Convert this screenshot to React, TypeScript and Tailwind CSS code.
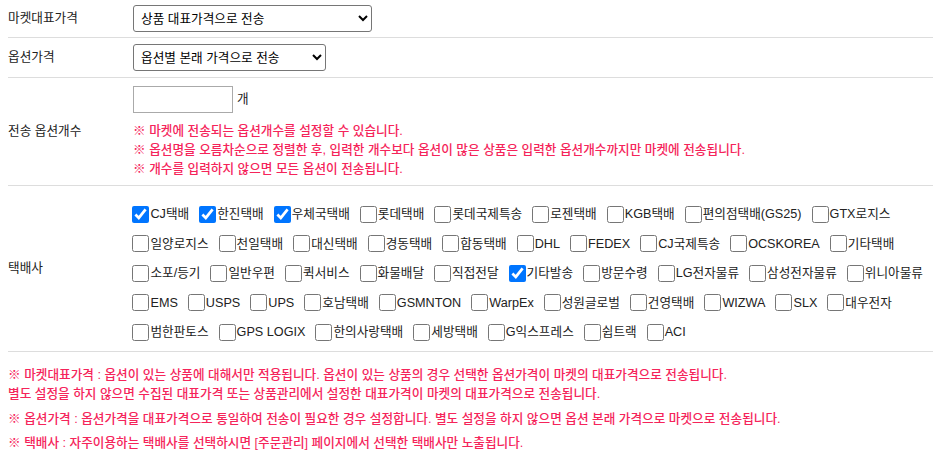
import React from "react";

const couriers: [string, boolean][][] = [
  [["CJ택배", true], ["한진택배", true], ["우체국택배", true], ["롯데택배", false], ["롯데국제특송", false], ["로젠택배", false], ["KGB택배", false], ["편의점택배(GS25)", false], ["GTX로지스", false]],
  [["일양로지스", false], ["천일택배", false], ["대신택배", false], ["경동택배", false], ["합동택배", false], ["DHL", false], ["FEDEX", false], ["CJ국제특송", false], ["OCSKOREA", false], ["기타택배", false]],
  [["소포/등기", false], ["일반우편", false], ["퀵서비스", false], ["화물배달", false], ["직접전달", false], ["기타발송", true], ["방문수령", false], ["LG전자물류", false], ["삼성전자물류", false], ["위니아물류", false]],
  [["EMS", false], ["USPS", false], ["UPS", false], ["호남택배", false], ["GSMNTON", false], ["WarpEx", false], ["성원글로벌", false], ["건영택배", false], ["WIZWA", false], ["SLX", false], ["대우전자", false]],
  [["범한판토스", false], ["GPS LOGIX", false], ["한의사랑택배", false], ["세방택배", false], ["G익스프레스", false], ["쉽트랙", false], ["ACI", false]],
];

const font = { fontFamily: "'Liberation Sans', 'Noto Sans CJK KR', sans-serif" };

export default function App() {
  return (
    <div className="w-[933px] bg-white text-[12.65px] text-[#222] pl-2" style={font}>
      <div className="flex items-center h-[38px] border-b border-[#ddd]">
        <div className="w-[125px]">마켓대표가격</div>
        <select defaultValue="a" className="w-[239px] h-[27px] border border-[#767676] rounded-[3px] pl-[3px] text-[12.65px] text-black bg-white">
          <option value="a">상품 대표가격으로 전송</option>
        </select>
      </div>
      <div className="flex items-center h-[40px] border-b border-[#ddd]">
        <div className="w-[125px]">옵션가격</div>
        <select defaultValue="a" className="w-[193px] h-[27px] border border-[#767676] rounded-[3px] pl-[3px] text-[12.65px] text-black bg-white">
          <option value="a">옵션별 본래 가격으로 전송</option>
        </select>
      </div>
      <div className="flex items-center h-[108px] border-b border-[#ddd]">
        <div className="w-[125px]">전송 옵션개수</div>
        <div className="flex flex-col pt-[8px] pb-[6px]">
          <div className="flex items-center gap-[4px]">
            <input type="text" className="w-[100px] h-[27px] border border-[#aaa] bg-white" />
            <span>개</span>
          </div>
          <div className="mt-[9px] text-[#f5245a] font-medium leading-[19px]">
            <div>※ 마켓에 전송되는 옵션개수를 설정할 수 있습니다.</div>
            <div>※ 옵션명을 오름차순으로 정렬한 후, 입력한 개수보다 옵션이 많은 상품은 입력한 옵션개수까지만 마켓에 전송됩니다.</div>
            <div>※ 개수를 입력하지 않으면 모든 옵션이 전송됩니다.</div>
          </div>
        </div>
      </div>
      <div className="flex items-center h-[166px] border-b border-[#ddd]">
        <div className="w-[125px]">택배사</div>
        <div className="flex flex-col pt-[14px] pb-[4px]">
          {couriers.map((row, i) => (
            <div key={i} className="flex items-center h-[29.5px]">
              {row.map(([name, checked]) => (
                <label key={name} className="flex items-center mr-[10px] whitespace-nowrap">
                  <input type="checkbox" defaultChecked={checked} className="w-[17px] h-[17px] m-0 mr-[1px] accent-[#0075ff]" />
                  <span>{name}</span>
                </label>
              ))}
            </div>
          ))}
        </div>
      </div>
      <div className="pt-[14px] text-[#f5245a] font-medium leading-[19px]">
        <div>※ 마켓대표가격 : 옵션이 있는 상품에 대해서만 적용됩니다. 옵션이 있는 상품의 경우 선택한 옵션가격이 마켓의 대표가격으로 전송됩니다.</div>
        <div>별도 설정을 하지 않으면 수집된 대표가격 또는 상품관리에서 설정한 대표가격이 마켓의 대표가격으로 전송됩니다.</div>
        <div className="mt-[6px]">※ 옵션가격 : 옵션가격을 대표가격으로 통일하여 전송이 필요한 경우 설정합니다. 별도 설정을 하지 않으면 옵션 본래 가격으로 마켓으로 전송됩니다.</div>
        <div className="mt-[5px]">※ 택배사 : 자주이용하는 택배사를 선택하시면 [주문관리] 페이지에서 선택한 택배사만 노출됩니다.</div>
      </div>
    </div>
  );
}
